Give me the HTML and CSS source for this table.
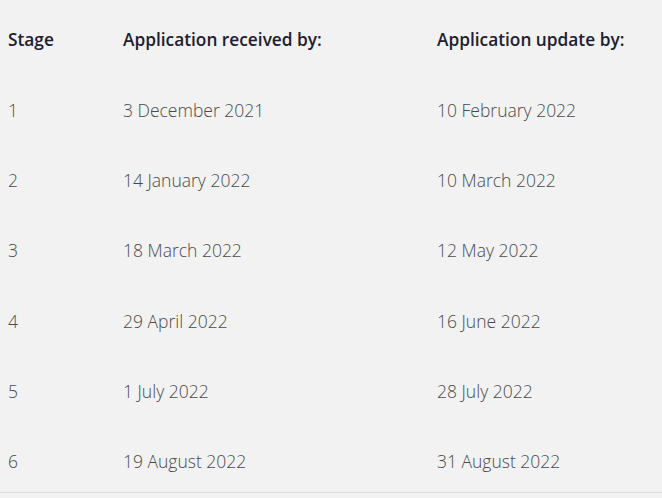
FILE: index.html
```html
<!DOCTYPE html>
<html lang="en">
<head>
<meta charset="utf-8">
<title>Stages</title>
<link rel="stylesheet" href="styles.css">
</head>
<body>
<div class="table">
  <div class="row head">
    <div class="cell">Stage</div>
    <div class="cell">Application received by:</div>
    <div class="cell">Application update by:</div>
  </div>
  <div class="row">
    <div class="cell stage">1</div>
    <div class="cell">3 December 2021</div>
    <div class="cell">10 February 2022</div>
  </div>
  <div class="row">
    <div class="cell stage">2</div>
    <div class="cell">14 January 2022</div>
    <div class="cell">10 March 2022</div>
  </div>
  <div class="row">
    <div class="cell stage">3</div>
    <div class="cell">18 March 2022</div>
    <div class="cell">12 May 2022</div>
  </div>
  <div class="row">
    <div class="cell stage">4</div>
    <div class="cell">29 April 2022</div>
    <div class="cell">16 June 2022</div>
  </div>
  <div class="row">
    <div class="cell stage">5</div>
    <div class="cell">1 July 2022</div>
    <div class="cell">28 July 2022</div>
  </div>
  <div class="row last">
    <div class="cell stage">6</div>
    <div class="cell">19 August 2022</div>
    <div class="cell">31 August 2022</div>
  </div>
</div>
</body>
</html>
```
FILE: styles.css
```css
html, body {
  margin: 0;
  padding: 0;
  background: #f2f2f2;
}
body {
  font-family: "Open Sans", "Liberation Sans", sans-serif;
  font-size: 17.5px;
  font-weight: 300;
  color: #4a4a4a;
}
.table {
  display: flex;
  flex-direction: column;
}
.row {
  display: grid;
  grid-template-columns: 115px 314px 1fr;
}
.cell {
  padding: 28.5px 8px 19.5px;
  line-height: 22.33px;
  white-space: nowrap;
}
.head .cell {
  font-size: 17.3px;
  font-weight: 600;
  color: #1d2030;
}
.last {
  border-bottom: 1px solid #dcdcdc;
}
```
